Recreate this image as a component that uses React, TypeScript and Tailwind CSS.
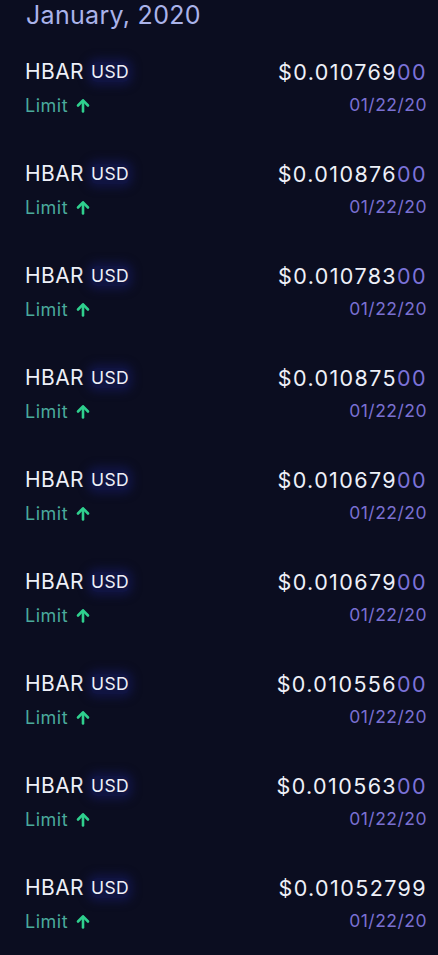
import React from "react";

const rows = [
  ["$0.010769", "00"],
  ["$0.010876", "00"],
  ["$0.010783", "00"],
  ["$0.010875", "00"],
  ["$0.010679", "00"],
  ["$0.010679", "00"],
  ["$0.010556", "00"],
  ["$0.010563", "00"],
  ["$0.01052799", ""],
];

function Arrow() {
  return (
    <svg width="14" height="15" viewBox="0 0 14 15" className="ml-[8px]">
      <path d="M7 13.5V3" stroke="#2fd08e" strokeWidth="2.6" strokeLinecap="round" />
      <path d="M2 7.5L7 2.3L12 7.5" stroke="#2fd08e" strokeWidth="2.6" fill="none" strokeLinecap="round" strokeLinejoin="round" />
    </svg>
  );
}

export default function App() {
  return (
    <div
      className="w-[438px] h-[955px] bg-[#0b0d20] overflow-hidden"
      style={{ fontFamily: "Inter, 'Noto Sans', sans-serif" }}
    >
      <div className="pl-[26px] h-[40px] flex items-start">
        <div className="text-[25px] leading-[30px] text-[#aab3ea] tracking-[0.3px]">January, 2020</div>
      </div>
      <div className="flex flex-col">
        {rows.map(([p, z], i) => (
          <div key={i} className="h-[102px] pl-[25px] pr-[11px] pt-[18px] flex flex-col">
            <div className="flex items-center justify-between h-[28px]">
              <div className="flex items-center">
                <span className="text-[21px] text-[#eef0f8] tracking-[0.4px]">HBAR</span>
                <span className="ml-[7px] text-[17.5px] text-[#eef0f8] rounded-[6px] bg-[#101441] shadow-[0_0_8px_4px_#101441] leading-[20px] tracking-[0.4px]">USD</span>
              </div>
              <div className="text-[21.5px] text-[#eef0f8] tracking-[1.4px]">
                {p}
                <span className="text-[#7b72d9]">{z}</span>
              </div>
            </div>
            <div className="flex items-center justify-between h-[28px] mt-[5px]">
              <div className="flex items-center">
                <span className="text-[18px] text-[#4aaa9c] tracking-[0.5px]">Limit</span>
                <Arrow />
              </div>
              <div className="text-[17.5px] text-[#7a70d2] tracking-[0.5px]">01/22/20</div>
            </div>
          </div>
        ))}
      </div>
    </div>
  );
}
